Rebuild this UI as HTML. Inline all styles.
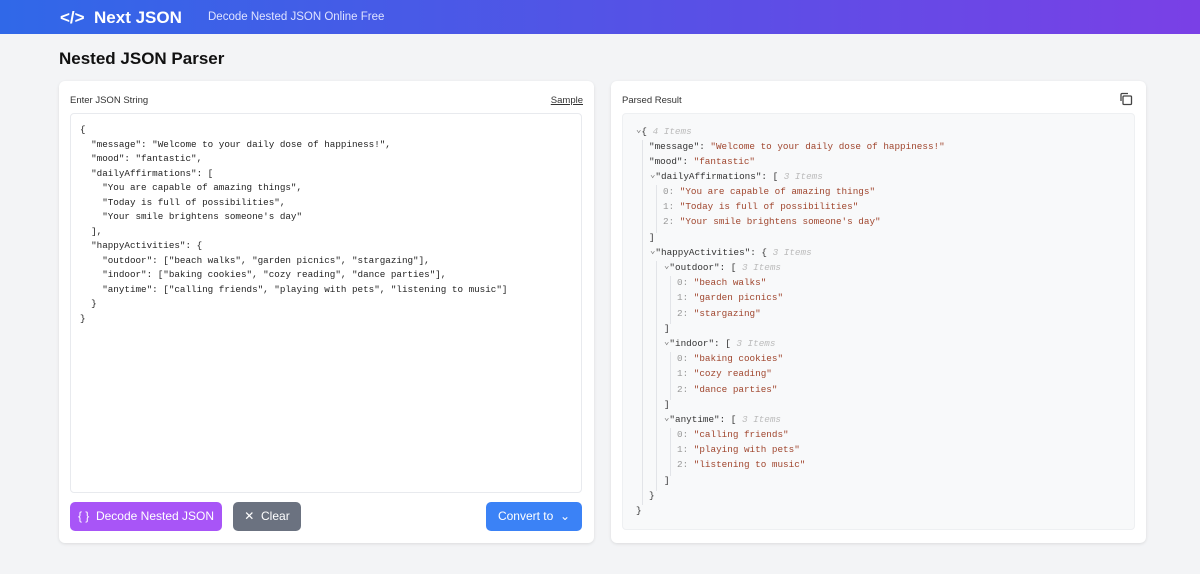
<!DOCTYPE html>
<html><head><meta charset="utf-8"><style>
*{box-sizing:border-box;margin:0;padding:0}
body{width:1200px;height:574px;background:#f3f4f6;font-family:"Liberation Sans",sans-serif;position:relative;overflow:hidden}
.hdr{position:absolute;left:0;top:0;width:1200px;height:34px;background:linear-gradient(90deg,#3068e8,#5a4fe6 60%,#7a40e6)}
.logo{position:absolute;left:60px;top:8px;color:#fff;font-weight:bold;font-size:17px}
.tag{position:absolute;left:208px;top:11px;color:#dfe3ff;font-size:11.5px}
h1{position:absolute;left:59px;top:49px;font-size:17px;font-weight:bold;color:#111}
.card{position:absolute;top:81px;width:535px;height:462px;background:#fff;border-radius:6px;box-shadow:0 1px 3px rgba(0,0,0,.1)}
.lbl{position:absolute;top:14px;font-size:9.5px;color:#333}
.mono{font-family:"Liberation Mono",monospace;font-size:9.25px;white-space:pre}
.ta{position:absolute;left:11px;top:32px;width:512px;height:380px;border:1px solid #e8eaee;border-radius:4px}
.ta pre{position:absolute;left:9px;top:9px;line-height:14.5px;color:#222}
.btn{position:absolute;top:421px;height:29px;border-radius:5px;color:#fff;font-size:12px;line-height:29px;text-align:center}
.res{position:absolute;left:11px;top:32px;width:513px;height:417px;background:#f8f9fa;border:1px solid #eef0f2;border-radius:4px}
.l{position:absolute;font-family:"Liberation Mono",monospace;font-size:9.3px;white-space:pre;color:#333;line-height:12px}
.s{color:#a0462e}.g{color:#bbb;font-style:italic}.n{color:#999}.t{color:#777;font-size:9px;display:inline-block;transform:translateY(-2px)}
.vl{position:absolute;border-left:1px solid #e2e4e8}
</style></head><body>
<div class="hdr"><div class="logo">&lt;/&gt;&nbsp; Next JSON</div><div class="tag">Decode Nested JSON Online Free</div></div>
<h1>Nested JSON Parser</h1>
<div class="card" style="left:59px">
<div class="lbl" style="left:11px">Enter JSON String</div>
<div class="lbl" style="right:11px;text-decoration:underline">Sample</div>
<div class="ta"><pre class="mono">{
  "message": "Welcome to your daily dose of happiness!",
  "mood": "fantastic",
  "dailyAffirmations": [
    "You are capable of amazing things",
    "Today is full of possibilities",
    "Your smile brightens someone's day"
  ],
  "happyActivities": {
    "outdoor": ["beach walks", "garden picnics", "stargazing"],
    "indoor": ["baking cookies", "cozy reading", "dance parties"],
    "anytime": ["calling friends", "playing with pets", "listening to music"]
  }
}</pre></div>
<div class="btn" style="left:11px;width:152px;background:#a855f7">{ }&nbsp; Decode Nested JSON</div>
<div class="btn" style="left:174px;width:68px;background:#6b7280">✕&nbsp; Clear</div>
<div class="btn" style="left:427px;width:96px;background:#3b82f6">Convert to&nbsp; ⌄</div>
</div>
<div class="card" style="left:611px">
<div class="lbl" style="left:11px">Parsed Result</div>
<svg style="position:absolute;left:508px;top:11px" width="14" height="14" viewBox="0 0 14 14" fill="none" stroke="#444" stroke-width="1.3"><rect x="4" y="4" width="8.5" height="8.5" rx="1"/><path d="M2 9V2.5A1 1 0 0 1 3 1.5h6"/></svg>
</div>
<div class="res" style="left:622px;top:113px"></div>
<div class="vl" style="left:642px;top:140px;height:365px"></div>
<div class="vl" style="left:656px;top:185px;height:48px"></div>
<div class="vl" style="left:656px;top:261px;height:230px"></div>
<div class="vl" style="left:670px;top:276px;height:48px"></div>
<div class="vl" style="left:670px;top:352px;height:48px"></div>
<div class="vl" style="left:670px;top:428px;height:48px"></div>
<div class="l" style="left:636px;top:126px"><span class="t">⌄</span>{ <span class="g">4 Items</span></div>
<div class="l" style="left:649px;top:141px">"message": <span class="s">"Welcome to your daily dose of happiness!"</span></div>
<div class="l" style="left:649px;top:156px">"mood": <span class="s">"fantastic"</span></div>
<div class="l" style="left:650px;top:171px"><span class="t">⌄</span>"dailyAffirmations": [ <span class="g">3 Items</span></div>
<div class="l" style="left:663px;top:186px"><span class="n">0:</span> <span class="s">"You are capable of amazing things"</span></div>
<div class="l" style="left:663px;top:201px"><span class="n">1:</span> <span class="s">"Today is full of possibilities"</span></div>
<div class="l" style="left:663px;top:216px"><span class="n">2:</span> <span class="s">"Your smile brightens someone's day"</span></div>
<div class="l" style="left:649px;top:232px">]</div>
<div class="l" style="left:650px;top:247px"><span class="t">⌄</span>"happyActivities": { <span class="g">3 Items</span></div>
<div class="l" style="left:664px;top:262px"><span class="t">⌄</span>"outdoor": [ <span class="g">3 Items</span></div>
<div class="l" style="left:677px;top:277px"><span class="n">0:</span> <span class="s">"beach walks"</span></div>
<div class="l" style="left:677px;top:292px"><span class="n">1:</span> <span class="s">"garden picnics"</span></div>
<div class="l" style="left:677px;top:308px"><span class="n">2:</span> <span class="s">"stargazing"</span></div>
<div class="l" style="left:664px;top:323px">]</div>
<div class="l" style="left:664px;top:338px"><span class="t">⌄</span>"indoor": [ <span class="g">3 Items</span></div>
<div class="l" style="left:677px;top:353px"><span class="n">0:</span> <span class="s">"baking cookies"</span></div>
<div class="l" style="left:677px;top:368px"><span class="n">1:</span> <span class="s">"cozy reading"</span></div>
<div class="l" style="left:677px;top:384px"><span class="n">2:</span> <span class="s">"dance parties"</span></div>
<div class="l" style="left:664px;top:399px">]</div>
<div class="l" style="left:664px;top:414px"><span class="t">⌄</span>"anytime": [ <span class="g">3 Items</span></div>
<div class="l" style="left:677px;top:429px"><span class="n">0:</span> <span class="s">"calling friends"</span></div>
<div class="l" style="left:677px;top:444px"><span class="n">1:</span> <span class="s">"playing with pets"</span></div>
<div class="l" style="left:677px;top:459px"><span class="n">2:</span> <span class="s">"listening to music"</span></div>
<div class="l" style="left:664px;top:475px">]</div>
<div class="l" style="left:649px;top:490px">}</div>
<div class="l" style="left:636px;top:505px">}</div>
</body></html>
